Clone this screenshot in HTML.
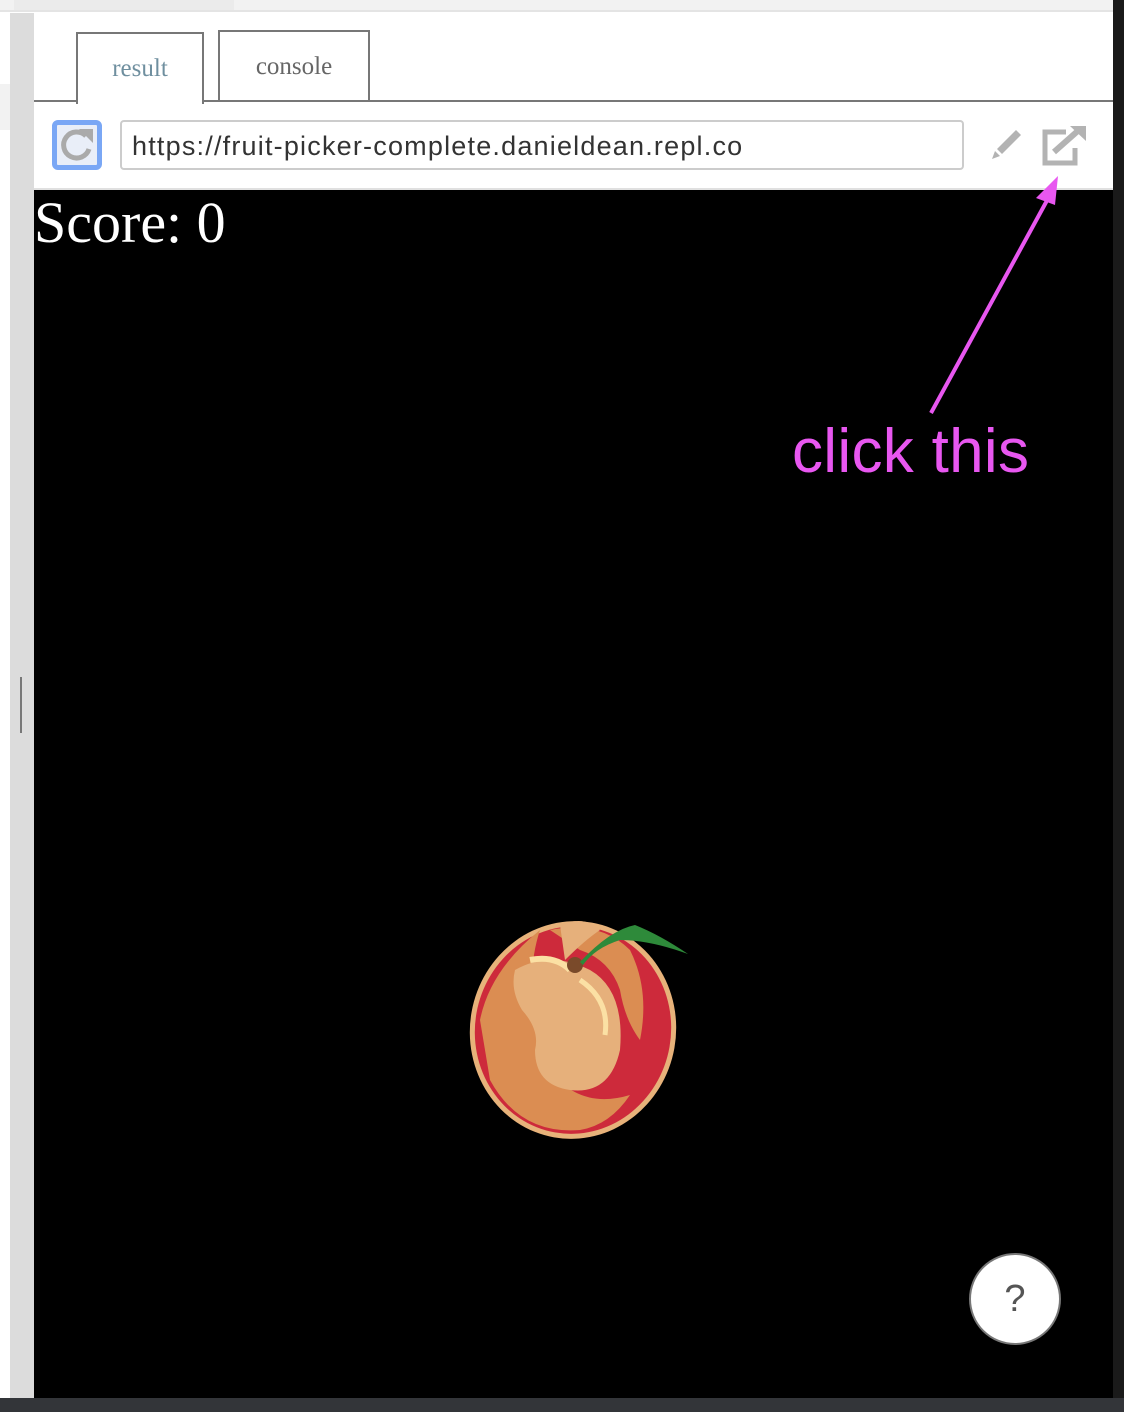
<!DOCTYPE html>
<html><head><style>
html,body{margin:0;padding:0;width:1124px;height:1412px;overflow:hidden;background:#fff;position:relative;font-family:"Liberation Sans",sans-serif}
div{box-sizing:border-box}
.a{position:absolute}
</style></head><body>
<div class="a" style="left:0;top:0;width:1124px;height:12px;background:#f2f2f2;border-bottom:2px solid #e4e4e4"></div>
<div class="a" style="left:14px;top:0;width:220px;height:10px;background:#ebebeb"></div>
<div class="a" style="left:0;top:84px;width:10px;height:46px;background:#f2f2f2"></div>
<div class="a" style="left:10px;top:13px;width:24px;height:1385px;background:#dcdcdc"></div>
<div class="a" style="left:20px;top:677px;width:2px;height:56px;background:#777"></div>
<div class="a" style="left:1113px;top:0;width:11px;height:1412px;background:#1a1a1a"></div>
<div class="a" style="left:34px;top:13px;width:1079px;height:177px;background:#fff"></div>
<div class="a" style="left:34px;top:100px;width:1079px;height:2px;background:#777"></div>
<div class="a" style="left:76px;top:32px;width:128px;height:72px;border:2px solid #777;border-bottom:none;background:#fff"></div>
<div class="a" style="left:218px;top:30px;width:152px;height:72px;border:2px solid #777;border-bottom:none;background:#fff"></div>
<div class="a" style="left:220px;top:100px;width:148px;height:2px;background:#777"></div>
<div class="a" style="left:78px;top:55px;width:124px;text-align:center;font:25px 'Liberation Serif',serif;color:#6f8f9f">result</div>
<div class="a" style="left:220px;top:53px;width:148px;text-align:center;font:25px 'Liberation Serif',serif;color:#666">console</div>
<div class="a" style="left:52px;top:120px;width:50px;height:50px;border:5px solid #7aa7f5;border-radius:6px;background:#e9eef8"></div>
<svg class="a" style="left:56px;top:124px" width="42" height="42" viewBox="0 0 42 42"><path d="M30 12 A13 13 0 1 0 33 25" fill="none" stroke="#aaa" stroke-width="5"/><path d="M23 5 L37 5 L37 19 Z" fill="#aaa"/></svg>
<div class="a" style="left:120px;top:120px;width:844px;height:50px;border:2px solid #ccc;border-radius:4px;padding:10px 0 0 10px;font-size:27px;color:#333;line-height:28px;letter-spacing:1.2px;white-space:nowrap">https://fruit-picker-complete.danieldean.repl.co</div>
<svg class="a" style="left:990px;top:128px" width="32" height="32" viewBox="0 0 32 32"><path d="M26 2 L31 7 L12 26 L7 21 Z" fill="#b3b3b3"/><path d="M5 23 L10 28 L2 31 Z" fill="#b3b3b3"/></svg>
<svg class="a" style="left:1040px;top:124px" width="48" height="42" viewBox="0 0 48 42"><path d="M26 8 L5 8 L5 39 L35 39 L35 24" fill="none" stroke="#b3b3b3" stroke-width="5"/><path d="M14 28 L40 5" stroke="#b3b3b3" stroke-width="6"/><path d="M30 2 L46 2 L46 17 Z" fill="#b3b3b3"/></svg>
<div class="a" style="left:34px;top:188px;width:1079px;height:2px;background:#e0e0e0"></div>
<div class="a" style="left:34px;top:190px;width:1079px;height:1208px;background:#000"></div>
<div class="a" style="left:0;top:1398px;width:1124px;height:14px;background:#333539"></div>
<div class="a" style="left:34px;top:190px;font:58px 'Liberation Serif',serif;color:#fff;line-height:66px">Score: 0</div>
<svg class="a" style="left:0;top:0" width="1124" height="1412"><path d="M931 413 L1050 195" stroke="#e857f0" stroke-width="4"/><path d="M1058 176 L1036 198 L1055 205 Z" fill="#e857f0"/></svg>
<div class="a" style="left:792px;top:416px;font-size:62px;color:#e857f0;line-height:72px;letter-spacing:0.3px">click this</div>
<svg class="a" style="left:460px;top:910px" width="240" height="240" viewBox="0 0 240 240">
<ellipse cx="113" cy="120" rx="103" ry="109" fill="#e7b27a" transform="rotate(10 113 120)"/>
<ellipse cx="113" cy="120" rx="98" ry="104" fill="#cd2a3b" transform="rotate(10 113 120)"/>
<path d="M20 110 Q30 60 80 20 Q60 80 90 160 Q120 200 170 185 Q150 215 120 220 Q60 225 30 170 Z" fill="#db8d52"/>
<path d="M90 20 Q140 10 170 40 Q190 80 180 130 Q165 110 160 80 Q150 50 120 40 Z" fill="#db8d52"/>
<path d="M55 60 Q90 40 130 60 Q165 80 160 140 Q150 185 110 180 Q75 175 75 140 Q80 120 62 100 Q50 80 55 60 Z" fill="#e6b07b"/>
<path d="M100 15 Q125 5 140 20 Q125 30 105 50 Z" fill="#e6b07b"/>
<path d="M70 50 Q95 45 110 60" stroke="#fbe0a4" stroke-width="6" fill="none"/>
<path d="M120 70 Q150 90 145 125" stroke="#fbe0a4" stroke-width="5" fill="none"/>
<circle cx="115" cy="55" r="8" fill="#7a4a2a"/>
<path d="M120 52 Q150 20 175 15 Q200 25 228 44 Q190 30 160 30 Q135 38 123 55 Z" fill="#2e8a3a"/>
</svg>
<div class="a" style="left:969px;top:1253px;width:92px;height:92px;border-radius:50%;background:#fff;border:2px solid #777;text-align:center;font-size:38px;line-height:88px;color:#555">?</div>
</body></html>
